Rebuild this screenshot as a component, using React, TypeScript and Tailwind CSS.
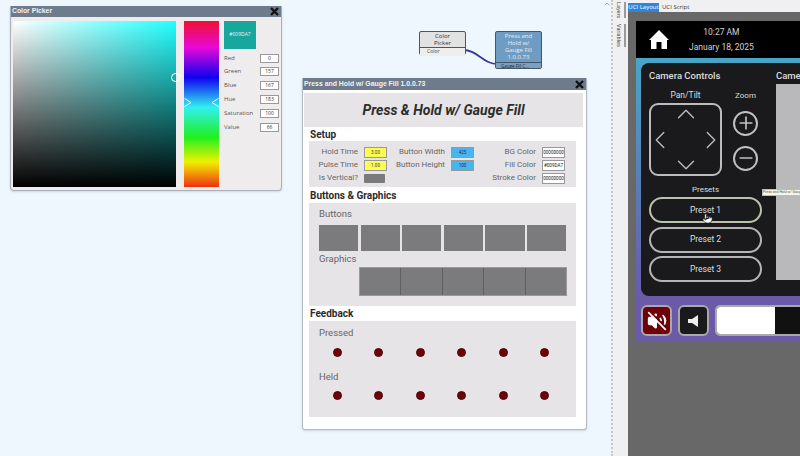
import { ChevronUp, ChevronDown, ChevronLeft, ChevronRight, Plus, Minus, Pointer, ChevronUp as Caret, VolumeOff } from 'lucide-react';

const pickerRows = [
  ['Red', '0'],
  ['Green', '157'],
  ['Blue', '167'],
  ['Hue', '183'],
  ['Saturation', '100'],
  ['Value', '66'],
];

function CloseX() {
  return (
    <svg width="9" height="9" viewBox="0 0 9 9">
      <path d="M1 1 L8 8 M8 1 L1 8" stroke="#111" strokeWidth="2.4" />
    </svg>
  );
}

function ColorPicker() {
  return (
    <div className="absolute left-[10px] top-[6px] w-[272px] h-[185px] rounded-b-[4px] bg-[#eeeced] border border-t-0 border-[#a9b0b9] shadow-sm flex flex-col font-['Open_Sans',sans-serif]">
      <div className="h-[11px] bg-[#6d7b8d] flex items-center justify-between pl-[1px] pr-[2px] font-['Liberation_Sans',sans-serif]">
        <span className="text-[6.8px] font-bold text-[#f2f2f2] leading-none">Color Picker</span>
        <CloseX />
      </div>
      <div className="flex pl-[2px] pt-[4px]">
        <div className="relative w-[163px] h-[166px] bg-[linear-gradient(to_bottom,transparent,#000),linear-gradient(to_right,#fff,#2ff)]">
          <div className="absolute left-[158px] top-[52px] w-[9px] h-[9px] rounded-full border border-white" />
        </div>
        <div className="relative ml-[8px] w-[35px] h-[166px] bg-[linear-gradient(to_bottom,#f01030_0%,#e808d8_16%,#1000f0_34%,#30f0f0_52%,#20f020_70%,#f0f000_85%,#f03010_100%)]">
          <svg className="absolute left-0 top-[77px]" width="35" height="9" viewBox="0 0 35 9">
            <path d="M0.5 0.5 L7 4.5 L0.5 8.5 M34.5 0.5 L28 4.5 L34.5 8.5" fill="none" stroke="#fff" />
          </svg>
        </div>
        <div className="ml-[5px] w-[55px] flex flex-col">
          <div className="w-[32px] h-[28px] bg-[#17a79c] flex items-center justify-center text-[5px] text-[#e8f5f4]">#009DA7</div>
          <div className="mt-[4px] flex flex-col gap-[3.9px]">
            {pickerRows.map(([label, val]) => (
              <div key={label} className="h-[10px] flex items-center justify-between">
                <span className="text-[6px] text-[#555]">{label}</span>
                <span className="w-[19px] h-[9px] bg-white border border-[#999] text-[5px] leading-[7px] text-center text-[#333]">{val}</span>
              </div>
            ))}
          </div>
        </div>
      </div>
    </div>
  );
}

function Nodes() {
  return (
    <>
      <svg className="absolute left-[460px] top-[45px]" width="45" height="25" viewBox="0 0 45 25">
        <path d="M3 5 C 18 5, 22 19, 38 19" fill="none" stroke="#3a36a0" strokeWidth="1.8" />
      </svg>
      <div className="absolute left-[419px] top-[31px] w-[47px] h-[24px] rounded-[2px] border border-[#555] bg-[#e2e2e2] flex flex-col font-['Open_Sans',sans-serif]">
        <div className="h-[16px] text-center text-[6px] leading-[7px] text-[#333] pt-px">Color<br />Picker</div>
        <div className="flex-1 bg-[#eeeeee] border-t border-[#555] flex items-center pl-[7px] text-[5px] text-[#444]">Color</div>
      </div>
      <div className="absolute left-[495px] top-[31px] w-[47px] h-[38px] rounded-[2px] border border-[#44566a] bg-[#6f9cc2] flex flex-col font-['Open_Sans',sans-serif]">
        <div className="h-[30px] text-center text-[6px] leading-[7px] text-[#e8eef5] pt-px">Press and<br />Hold w/<br />Gauge Fill<br />1.0.0.73</div>
        <div className="flex-1 bg-[#7d9fc0] border-t border-[#44566a] pl-[5px] text-[4.5px] leading-[6px] text-[#10253a] whitespace-nowrap overflow-hidden">Gauge Fill C...</div>
      </div>
    </>
  );
}

const buttons = [0, 1, 2, 3, 4, 5];

function SectionTitle({ children, height }: { children: string; height: string }) {
  return <div className={`pl-[7px] text-[10px] font-bold text-[#2b2b2b] flex items-center shrink-0 ${height}`}>{children}</div>;
}

function Led() {
  return <span className="block w-[9px] h-[9px] rounded-full bg-[#6e0208] border border-[#4a0a0a]" />;
}

function LedRow({ top }: { top: string }) {
  return (
    <div className={`pl-[13.5px] flex gap-[32.6px] ${top}`}>
      {buttons.map((b) => <Led key={b} />)}
    </div>
  );
}

function SetupInput({ value, tone }: { value: string; tone: 'yellow' | 'blue' | 'white' }) {
  const toneClass =
    tone === 'yellow' ? 'bg-[#fdfd50] text-[#444]' : tone === 'blue' ? 'bg-[#48b6ee] text-[#234]' : 'bg-white text-[#222]';
  return (
    <span className={`w-[23px] h-[11px] border border-[#999] text-[4.6px] leading-[9px] text-center overflow-hidden whitespace-nowrap ${toneClass}`}>
      {value}
    </span>
  );
}

function SetupLabel({ children }: { children: string }) {
  return <span className="text-right pr-[6px] whitespace-nowrap">{children}</span>;
}

function PressHold() {
  return (
    <div className="absolute left-[302px] top-[78px] w-[285px] h-[352px] bg-white border border-t-0 border-[#b4bac2] rounded-b-[3px] shadow-sm flex flex-col font-['Roboto',sans-serif]">
      <div className="h-[12px] shrink-0 bg-[#6d7b8d] flex items-center justify-between pl-[1px] pr-[2px] font-['Liberation_Sans',sans-serif]">
        <span className="text-[6.9px] font-bold text-[#f2f2f2] leading-none">Press and Hold w/ Gauge Fill 1.0.0.73</span>
        <CloseX />
      </div>
      <div className="mt-[3px] ml-[1px] w-[279px] h-[34px] shrink-0 bg-[#e6e4e6] flex items-center justify-center text-[14px] font-bold italic text-[#2d2d2d]">
        Press &amp; Hold w/ Gauge Fill
      </div>
      <SectionTitle height="h-[14px]">Setup</SectionTitle>
      <div className="ml-[6px] w-[267px] h-[46px] shrink-0 bg-[#e6e4e6] grid grid-cols-[55px_24px_63px_24px_67px_24px] grid-rows-[13px_13px_13px] items-center text-[8px] text-[#666] pt-[4.5px]">
        <SetupLabel>Hold Time</SetupLabel>
        <SetupInput value="3.00" tone="yellow" />
        <SetupLabel>Button Width</SetupLabel>
        <SetupInput value="425" tone="blue" />
        <SetupLabel>BG Color</SetupLabel>
        <SetupInput value="00000000" tone="white" />

        <SetupLabel>Pulse Time</SetupLabel>
        <SetupInput value="1.00" tone="yellow" />
        <SetupLabel>Button Height</SetupLabel>
        <SetupInput value="100" tone="blue" />
        <SetupLabel>Fill Color</SetupLabel>
        <SetupInput value="#009DA7" tone="white" />

        <SetupLabel>Is Vertical?</SetupLabel>
        <span className="w-[21px] h-[9px] rounded-[1px] bg-[#7a7a7c]" />
        <span className="col-start-5 text-right"><SetupLabel>Stroke Color</SetupLabel></span>
        <SetupInput value="00000000" tone="white" />
      </div>
      <SectionTitle height="h-[16px]">Buttons &amp; Graphics</SectionTitle>
      <div className="ml-[6px] w-[267px] h-[103px] shrink-0 bg-[#e6e4e6] flex flex-col pl-[10px] text-[9.5px] text-[#666]">
        <div className="h-[22px] leading-[22px]">Buttons</div>
        <div className="flex gap-[2.3px]">
          {buttons.map((b) => <div key={b} className="w-[39.3px] h-[26px] bg-[#7b7a7c]" />)}
        </div>
        <div className="h-[16px] leading-[16px]">Graphics</div>
        <div className="ml-[40px] w-[208px] h-[29px] flex bg-[#7b7a7c] border border-[#9a999b] divide-x divide-[#5f5f60]">
          {[0, 1, 2, 3, 4].map((g) => <div key={g} className="flex-1" />)}
        </div>
      </div>
      <SectionTitle height="h-[15px]">Feedback</SectionTitle>
      <div className="ml-[6px] w-[267px] h-[96px] shrink-0 bg-[#e6e4e6] flex flex-col pl-[10px] pt-[6px] text-[9.5px] text-[#666]">
        <div className="leading-[12px]">Pressed</div>
        <LedRow top="mt-[8.5px]" />
        <div className="leading-[12px] mt-[14.5px]">Held</div>
        <LedRow top="mt-[7.5px]" />
      </div>
    </div>
  );
}

function RoundIcon({ children }: { children: React.ReactNode }) {
  return (
    <div className="w-[25px] h-[25px] rounded-full border-2 border-[#c0c0c0] flex items-center justify-center text-[#c0c0c0]">
      {children}
    </div>
  );
}

function Preset({ label, active }: { label: string; active?: boolean }) {
  return (
    <div className={`h-[26px] w-[113px] rounded-[13px] border-2 flex items-center justify-center text-[8.5px] text-[#dddddd] ${active ? 'border-[#b8c2ac]' : 'border-[#b5b5b5]'}`}>
      {label}
    </div>
  );
}

function UciPanel() {
  return (
    <div className="absolute left-[611px] top-0 w-[189px] h-[456px] flex font-['Roboto',sans-serif]">
      <div className="w-[17px] bg-[#f0f0f2] border-l-2 border-dotted border-[#c8c8c8] text-[5.5px] text-[#444] flex flex-col items-center pt-[2px] gap-[6px]">
        <span className="[writing-mode:vertical-rl] border-r-2 border-[#9a9a9a] pr-px">Layers</span>
        <span className="[writing-mode:vertical-rl] border-r-2 border-[#9a9a9a] pr-px">Variables</span>
      </div>
      <div className="flex-1 flex flex-col min-w-0">
        <div className="h-[12px] bg-[#f0f0f2] flex items-end text-[6px] font-['Open_Sans',sans-serif] shrink-0">
          <span className="h-[9px] w-[31px] bg-[#2f86d8] text-white text-center leading-[9px]">UCI Layout</span>
          <span className="h-[9px] px-[3px] text-[#333] leading-[9px]">UCI Script</span>
        </div>
        <div className="flex-1 bg-[#686868] pl-[8px] pt-[9px] flex flex-col min-h-0 overflow-hidden">
          <div className="h-[37px] w-[200px] shrink-0 bg-black flex items-center pl-[13px] gap-[20px]">
            <svg width="20" height="21" viewBox="0 0 20 21">
              <path d="M10 1 L20 11 L18 11 L18 20 L12.5 20 L12.5 13 L7.5 13 L7.5 20 L2 20 L2 11 L0 11 Z" fill="#fff" />
            </svg>
            <div className="flex flex-col items-center gap-[7px] text-[#d4d4d4] leading-none">
              <span className="text-[8.5px]">10:27 AM</span>
              <span className="text-[8.5px]">January 18, 2025</span>
            </div>
          </div>
          <div className="h-[284px] w-[200px] shrink-0 bg-[linear-gradient(to_bottom,#48a6c8,#6a5aa8_85%)] pl-[5px] pt-[5px] flex flex-col">
            <div className="relative h-[233px] w-[195px] shrink-0 bg-[#1a1a1c] rounded-[8px] pl-[8px] pt-[7px] flex gap-[14px] text-[#dddddd]">
              <div className="w-[113px] flex flex-col">
                <div className="text-[9.5px] font-medium leading-[11px]">Camera Controls</div>
                <div className="mt-[9px] flex">
                  <div className="w-[73px] flex flex-col items-center">
                    <span className="text-[8.5px] leading-[11px]">Pan/Tilt</span>
                    <div className="mt-[2px] w-[73px] h-[73px] rounded-[9px] border-2 border-[#bdbdbd] grid grid-cols-[18px_1fr_18px] grid-rows-[18px_1fr_18px] place-items-center text-[#bdbdbd]">
                      <ChevronUp size={30} strokeWidth={1.1} className="col-start-2" />
                      <ChevronLeft size={30} strokeWidth={1.1} className="col-start-1 row-start-2" />
                      <ChevronRight size={30} strokeWidth={1.1} className="col-start-3 row-start-2" />
                      <ChevronDown size={30} strokeWidth={1.1} className="col-start-2 row-start-3" />
                    </div>
                  </div>
                  <div className="ml-[11px] flex flex-col items-center">
                    <span className="text-[8px] leading-[11px]">Zoom</span>
                    <div className="mt-[9.5px]"><RoundIcon><Plus size={20} strokeWidth={2} /></RoundIcon></div>
                    <div className="mt-[10px]"><RoundIcon><Minus size={20} strokeWidth={2} /></RoundIcon></div>
                  </div>
                </div>
                <div className="mt-[8px] text-center text-[8px] leading-[11px]">Presets</div>
                <div className="mt-[2px] flex flex-col gap-[3.5px]">
                  <Preset label="Preset 1" active />
                  <Preset label="Preset 2" />
                  <Preset label="Preset 3" />
                </div>
              </div>
              <div className="flex flex-col">
                <div className="text-[9.5px] font-medium leading-[11px] whitespace-nowrap">Camera</div>
                <div className="mt-[3px] w-[60px] h-[196px] bg-[#b9b9bb]" />
              </div>
              <div className="absolute left-[121px] top-[126px] w-[60px] h-[7px] bg-[#f7f7e8] border border-[#bbb] text-[3.5px] leading-[4px] text-[#555] whitespace-nowrap overflow-hidden">Press and Hold w/ Gauge</div>
              <div className="absolute left-[61px] top-[150px]">
                <Pointer size={11} fill="#fff" stroke="#222" strokeWidth={1.5} />
              </div>
            </div>
            <div className="mt-[9px] flex gap-[6px]">
              <div className="w-[31px] h-[31px] shrink-0 rounded-[6px] bg-[#6e0208] border-2 border-[#a9a9a9] flex items-center justify-center text-white">
                <VolumeOff size={20} fill="#fff" strokeWidth={2} />
              </div>
              <div className="w-[31px] h-[31px] shrink-0 rounded-[6px] bg-[#1a1a1c] border-2 border-[#a9a9a9] flex items-center justify-center">
                <svg width="11" height="12" viewBox="0 0 11 12"><path d="M0 4 H4 L10 0 V12 L4 8 H0 Z" fill="#eee" /></svg>
              </div>
              <div className="w-[200px] h-[31px] shrink-0 rounded-[5px] border-2 border-[#a9a9a9] flex overflow-hidden bg-[#111]">
                <div className="w-[58px] bg-white" />
              </div>
            </div>
          </div>
        </div>
      </div>
    </div>
  );
}

export default function App() {
  return (
    <div className="relative w-[800px] h-[456px] overflow-hidden bg-[#eef6fe]">
      <ColorPicker />
      <Nodes />
      <PressHold />
      <div className="absolute left-[603px] top-0 text-[#777]"><Caret size={8} /></div>
      <UciPanel />
    </div>
  );
}
